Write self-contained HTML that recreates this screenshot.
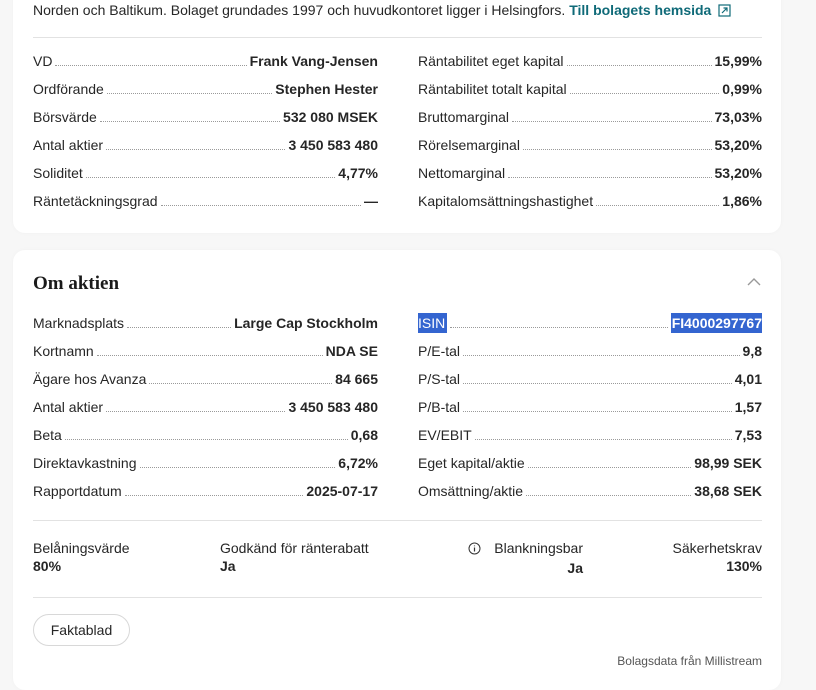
<!DOCTYPE html><html><head><meta charset="utf-8"><style>
*{margin:0;padding:0;box-sizing:border-box}
body{width:816px;height:664px;overflow:hidden;background:#f7f7f7;font-family:"Liberation Sans",sans-serif;color:#262626;font-size:14px;position:relative}
.card{position:absolute;left:13px;width:768px;background:#fff;border-radius:12px;box-shadow:0 0 4px rgba(0,0,0,.03)}
.row{position:absolute;height:20px;display:flex;align-items:flex-end;line-height:20px;white-space:nowrap}
.row .l{padding-right:3px}
.row .d{flex:1;border-bottom:1px dotted #9a9a9a;margin-bottom:5px}
.row .v{font-weight:bold;padding-left:3px}
.L{left:20px;width:345px}.R{left:405px;width:344px}
.sel{background:#3465d0;color:#fff}
.hr{position:absolute;left:20px;width:729px;height:1px;background:#e2e2e2}
.t{position:absolute;line-height:18px;white-space:nowrap}
b{font-weight:bold}
</style></head><body>
<div class="card" style="top:-20px;height:253px">
<div class="t" style="left:20px;top:21px">Norden och Baltikum. Bolaget grundades 1997 och huvudkontoret ligger i Helsingfors. <b style="color:#0f6a78">Till bolagets hemsida</b> <svg width="13" height="13" viewBox="0 0 13 13" style="vertical-align:-2px;margin-left:3px"><rect x="1" y="1" width="11" height="11" fill="none" stroke="#0f6a78" stroke-width="1.2"/><path d="M4 9L9 4M5.5 4H9V7.5" fill="none" stroke="#0f6a78" stroke-width="1.2"/></svg></div>
<div class="hr" style="top:57px"></div>
<div class="row L" style="top:71px"><span class="l">VD</span><span class="d"></span><span class="v">Frank Vang-Jensen</span></div>
<div class="row L" style="top:99px"><span class="l">Ordförande</span><span class="d"></span><span class="v">Stephen Hester</span></div>
<div class="row L" style="top:127px"><span class="l">Börsvärde</span><span class="d"></span><span class="v">532 080 MSEK</span></div>
<div class="row L" style="top:155px"><span class="l">Antal aktier</span><span class="d"></span><span class="v">3 450 583 480</span></div>
<div class="row L" style="top:183px"><span class="l">Soliditet</span><span class="d"></span><span class="v">4,77%</span></div>
<div class="row L" style="top:211px"><span class="l">Räntetäckningsgrad</span><span class="d"></span><span class="v">—</span></div>
<div class="row R" style="top:71px"><span class="l">Räntabilitet eget kapital</span><span class="d"></span><span class="v">15,99%</span></div>
<div class="row R" style="top:99px"><span class="l">Räntabilitet totalt kapital</span><span class="d"></span><span class="v">0,99%</span></div>
<div class="row R" style="top:127px"><span class="l">Bruttomarginal</span><span class="d"></span><span class="v">73,03%</span></div>
<div class="row R" style="top:155px"><span class="l">Rörelsemarginal</span><span class="d"></span><span class="v">53,20%</span></div>
<div class="row R" style="top:183px"><span class="l">Nettomarginal</span><span class="d"></span><span class="v">53,20%</span></div>
<div class="row R" style="top:211px"><span class="l">Kapitalomsättningshastighet</span><span class="d"></span><span class="v">1,86%</span></div>
</div>
<div class="card" style="top:250px;height:440px">
<div class="t" style="left:20px;top:22px;font-family:'Liberation Serif',serif;font-weight:bold;font-size:19px;line-height:24px;color:#1a1a1a">Om aktien</div>
<svg style="position:absolute;left:734px;top:27px" width="14" height="9" viewBox="0 0 14 9"><path d="M1 8L7 2L13 8" fill="none" stroke="#999" stroke-width="1.4"/></svg>
<div class="row L" style="top:63px"><span class="l">Marknadsplats</span><span class="d"></span><span class="v">Large Cap Stockholm</span></div>
<div class="row L" style="top:91px"><span class="l">Kortnamn</span><span class="d"></span><span class="v">NDA SE</span></div>
<div class="row L" style="top:119px"><span class="l">Ägare hos Avanza</span><span class="d"></span><span class="v">84 665</span></div>
<div class="row L" style="top:147px"><span class="l">Antal aktier</span><span class="d"></span><span class="v">3 450 583 480</span></div>
<div class="row L" style="top:175px"><span class="l">Beta</span><span class="d"></span><span class="v">0,68</span></div>
<div class="row L" style="top:203px"><span class="l">Direktavkastning</span><span class="d"></span><span class="v">6,72%</span></div>
<div class="row L" style="top:231px"><span class="l">Rapportdatum</span><span class="d"></span><span class="v">2025-07-17</span></div>
<div class="row R" style="top:63px"><span class="l sel" style="padding-right:2px;margin-right:3px">ISIN </span><span class="d"></span><span class="v sel" style="padding-left:1px;margin-left:3px">FI4000297767</span></div>
<div class="row R" style="top:91px"><span class="l">P/E-tal</span><span class="d"></span><span class="v">9,8</span></div>
<div class="row R" style="top:119px"><span class="l">P/S-tal</span><span class="d"></span><span class="v">4,01</span></div>
<div class="row R" style="top:147px"><span class="l">P/B-tal</span><span class="d"></span><span class="v">1,57</span></div>
<div class="row R" style="top:175px"><span class="l">EV/EBIT</span><span class="d"></span><span class="v">7,53</span></div>
<div class="row R" style="top:203px"><span class="l">Eget kapital/aktie</span><span class="d"></span><span class="v">98,99 SEK</span></div>
<div class="row R" style="top:231px"><span class="l">Omsättning/aktie</span><span class="d"></span><span class="v">38,68 SEK</span></div>
<div class="hr" style="top:270px"></div>
<div class="t" style="left:20px;top:289px">Belåningsvärde<br><b>80%</b></div>
<div class="t" style="left:207px;top:289px">Godkänd för ränterabatt<br><b>Ja</b></div>
<div class="t" style="left:455px;top:289px;width:115px;text-align:right"><svg width="13" height="13" viewBox="0 0 13 13" style="vertical-align:-2px;position:absolute;left:0;top:3px"><circle cx="6.5" cy="6.5" r="5.5" fill="none" stroke="#333" stroke-width="1"/><path d="M6.5 5.5V9.5M6.5 3.5V4.3" stroke="#333" stroke-width="1.2"/></svg>Blankningsbar<br><b style="position:relative;top:2px">Ja</b></div>
<div class="t" style="left:620px;top:289px;width:129px;text-align:right">Säkerhetskrav<br><b>130%</b></div>
<div class="hr" style="top:347px"></div>
<div style="position:absolute;left:20px;top:364px;width:97px;height:32px;border:1px solid #d8d8d8;border-radius:16px;text-align:center;line-height:30px">Faktablad</div>
<div class="t" style="left:560px;top:402px;width:189px;text-align:right;font-size:12px;color:#555">Bolagsdata från Millistream</div>
</div>
</body></html>
